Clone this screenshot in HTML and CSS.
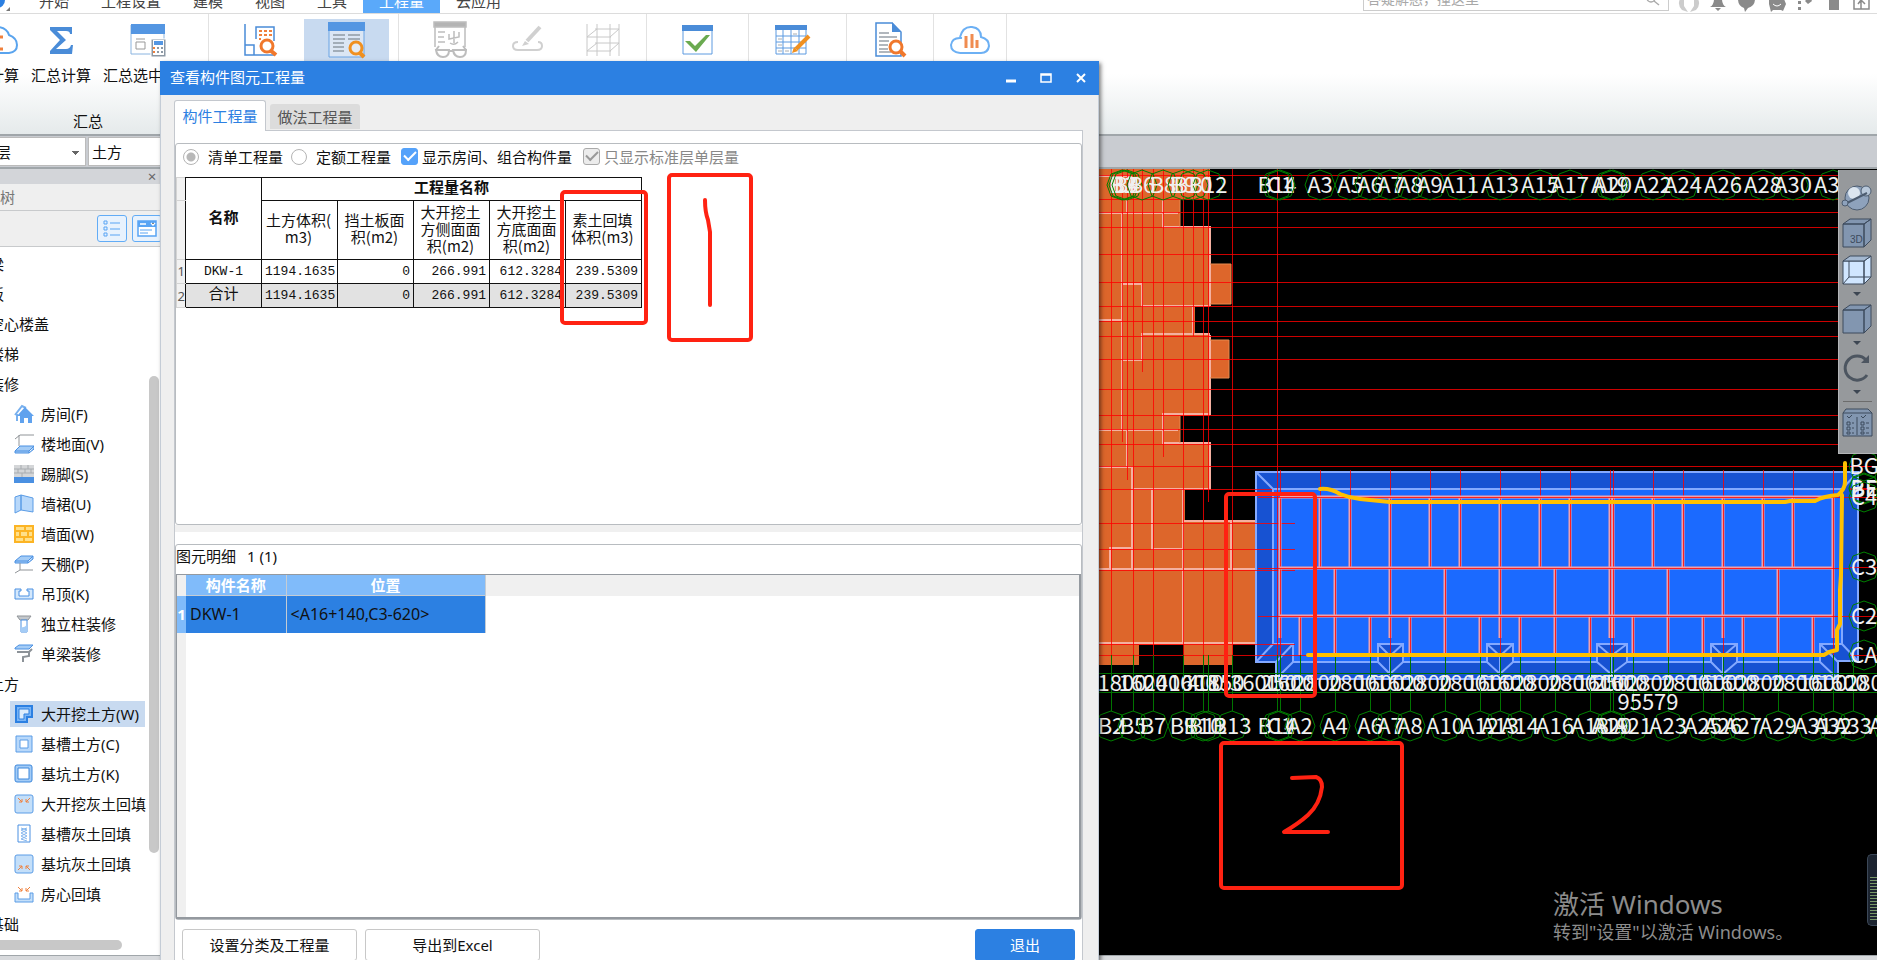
FILE: index.html
```html
<!DOCTYPE html>
<html lang="zh-CN">
<head>
<meta charset="UTF-8">
<meta name="viewport" content="width=device-width, initial-scale=1.0">
<title>查看构件图元工程量</title>
<link rel="stylesheet" href="styles.css">
</head>
<body>
<header class="menubar">
    <svg class="app-logo" width="16" height="13" viewBox="0 0 16 13"><circle cx="-3" cy="0" r="8" fill="#2c80e2"/><path d="M10 7v4H6z" fill="#777"/></svg>
    <nav class="menu">
        <a href="#">开始</a>
        <a href="#">工程设置</a>
        <a href="#">建模</a>
        <a href="#">视图</a>
        <a href="#">工具</a>
        <a href="#" class="current">工程量</a>
        <a href="#">云应用</a>
    </nav>
    <div class="search">
        <input type="text" placeholder="答疑解惑，撞这里" aria-label="搜索">
        <svg width="14" height="14" viewBox="0 0 14 14" fill="none" stroke="#aaa" stroke-width="1.5"><circle cx="5" cy="6" r="4"/><path d="M8 9l5 4"/></svg>
    </div>
    <svg class="status-icons" width="204" height="14" viewBox="1674 -4 204 14" fill="#8a8a8a">
        <path d="M1681-4q-3 6 2 11l6 2-4-6v-7zM1699-4q3 6-2 11l-6 2 4-6v-7z" fill="#ccc"/>
        <path d="M1711 4q4-2 4-8h8q0 6 4 8zM1716 5h6l-3 3z"/>
        <path d="M1739-4h17q0 7-7 9l-3 4-1-4q-6-2-6-9z"/>
        <path d="M1770-4h15l2 5-3 7-2-1h-8l-2 2-2-8z"/>
        <path d="M1774 1q4 4 8 0" fill="none" stroke="#fff"/>
        <path d="M1799-2h3v3h-3zM1799 4h3v3h-3zM1806-2l3 3 4-3-1-2h-4z"/>
        <path d="M1830-4h10V7h-10z"/>
        <path d="M1855-4V6h15V-4M1862 6v-9M1859 1l3-4 4 4" fill="none" stroke="#8a8a8a" stroke-width="1.5"/>
    </svg>
</header>

<div class="ribbon">
    <div class="group group-sum">
        <div class="tools">
            <button class="tool"><svg width="44" height="36" viewBox="0 0 44 36"><path d="M11 31Q3 30 3 23t8-8q2-10 12-10 9 1 11 8 8 3 8 10t-8 8z" fill="#fff" stroke="#5aa4ee" stroke-width="2"/><path d="M28 15H17l6 6-6 6h11" fill="none" stroke="#f0803c" stroke-width="3"/></svg><span>云计算</span></button>
            <button class="tool"><svg width="36" height="36" viewBox="0 0 36 36"><path d="M7 5h22v7h-2q0-3-4-3H14l9 9-10 9h10q4 0 5-4h2l-1 9H7v-3l10-11L7 8z" fill="#4a8cd8"/></svg><span>汇总计算</span></button>
            <button class="tool"><svg width="36" height="36" viewBox="0 0 36 36"><path d="M1 3h33v29H1z" fill="#fff" stroke="#8ab4e0"/><path d="M1 2h34v10H1z" fill="#5496e2"/><path d="M6 20h9v7H6zM6 17h9" fill="none" stroke="#999"/><path d="M21 17h15v18H21z" fill="#8c98a4" stroke="#fff"/><path d="M23 18h11v15H23z" fill="#fff"/><path d="M24 19h9v4h-9z" fill="#5496e2"/><path d="M23 25h2v2h-2zM23 29h2v2h-2z" fill="#f0803c"/><path d="M27 25h2v2h-2zM31 25h2v2h-2zM27 29h2v2h-2zM31 29h2v2h-2z" fill="#8c98a4"/></svg><span>汇总选中图元</span></button>
        </div>
        <div class="caption">汇总</div>
    </div>
    <div class="group group-view">
        <button class="tool" aria-label="查看计算式"><svg width="38" height="36" viewBox="0 0 38 36"><path d="M4 2v31h29M4 23h9v10M15 17V5h18v14" fill="none" stroke="#4a8cd8" stroke-width="1.5"/><path d="M18 8h3v2h-3zM23 8h3v2h-3zM28 8h3v2h-3zM18 12h3v2h-3zM23 12h3v2h-3zM28 12h3v2h-3zM18 16h2v2h-2z" fill="#f0803c"/><circle cx="26" cy="24" r="6" fill="#fff" stroke="#f0782c" stroke-width="3"/><path d="M29 28l6 5" stroke="#f0782c" stroke-width="4"/></svg></button>
        <button class="tool active" aria-label="查看工程量"><svg width="38" height="38" viewBox="0 0 38 38"><path d="M1 2h35v34H1z" fill="#dbe6f4" stroke="#6aa4e4"/><path d="M0 1h37v9H0z" fill="#5496e2"/><path d="M5 14h12M20 14h12M5 18h12M20 18h12M5 22h11M5 26h11M5 30h11" stroke="#909aa4" stroke-width="1.5"/><circle cx="28" cy="27" r="6" fill="#e4ecf6" stroke="#f09020" stroke-width="3"/><path d="M31 31l5 5" stroke="#f09020" stroke-width="4"/></svg></button>
    </div>
    <div class="group group-check">
        <button class="tool" aria-label="查看报表" disabled><svg width="38" height="38" viewBox="0 0 38 38" fill="none" stroke="#bdbdbd" stroke-width="1.5"><path d="M2 26V2h30v24"/><path d="M1 1h32v5H1z" fill="#b4b4b4"/><path d="M5 11h7M5 16h6M5 21h7M21 10v12M16 13v5l10-2v-5M17 22q4 3 8-1"/><path d="M3 29h13q0 7-6 7t-7-7zM20 29h13q0 7-6 7t-7-7z" fill="#fff" stroke-width="2"/><path d="M16 30h5M3 29l3-4M33 29l-3-4" stroke-width="2"/></svg></button>
        <button class="tool" aria-label="标记" disabled><svg width="36" height="36" viewBox="0 0 36 36" fill="none" stroke="#d0d0d0" stroke-width="2"><path d="M8 20q-5 0-5 4t5 4h19q5 0 5-4t-4-4"/><path d="M17 19L30 5" stroke-width="4"/><path d="M12 24l3-5 4 3z" fill="#d0d0d0" stroke="none"/></svg></button>
        <button class="tool" aria-label="钢筋三维" disabled><svg width="36" height="36" viewBox="0 0 36 36" fill="none" stroke="#c8c8c8"><path d="M2 2v32M12 2v32M25 2v32M34 2v32M2 15h24M10 7h24M2 29h24M10 21h24M2 15l10-8M25 15l9-8M2 29l10-8M25 29l9-8"/></svg></button>
    </div>
    <div class="group group-single">
        <button class="tool" aria-label="合法性检查"><svg width="34" height="34" viewBox="0 0 34 34"><path d="M2 3h29v28H2z" fill="#fff" stroke="#5c9ae0"/><path d="M1 2h31v6H1z" fill="#4a8cd8"/><path d="M4 18h5l5 5L25 12h4L15 29z" fill="#6aaa50"/></svg></button>
    </div>
    <div class="group group-edit">
        <button class="tool" aria-label="编辑报表"><svg width="36" height="34" viewBox="0 0 36 34"><path d="M1 3h30v28H1z" fill="#fff" stroke="#5c9ae0"/><path d="M0 2h32v5H0z" fill="#4a8cd8"/><path d="M1 13h30M1 19h30M1 25h30M8 7v24M16 7v24M24 7v24" stroke="#5c9ae0"/><path d="M3 22h4M3 28h4M10 28h4M3 16h4M18 11h4" stroke="#a8acb0"/><path d="M34 13L21 26" stroke="#f09020" stroke-width="4"/><path d="M17 30l2-6 4 4z" fill="#f09020"/></svg></button>
    </div>
    <div class="group group-report">
        <button class="tool" aria-label="查看报表"><svg width="34" height="38" viewBox="0 0 34 38"><path d="M3 2h16l9 9v24H3z" fill="#fff" stroke="#4a8cd8" stroke-width="1.5"/><path d="M19 1v10h9z" fill="#4a8cd8"/><path d="M6 12h10M6 16h18M6 20h10M6 24h9M6 28h9M6 31h12" stroke="#98a0a8" stroke-width="1.5"/><circle cx="23" cy="26" r="6" fill="#fff" stroke="#f0782c" stroke-width="3"/><path d="M27 30l5 5" stroke="#f0782c" stroke-width="4"/></svg></button>
    </div>
    <div class="group group-cloud">
        <button class="tool" aria-label="云指标"><svg width="44" height="34" viewBox="0 0 44 34"><path d="M12 30Q3 29 3 22q1-8 11-7M12 14Q15 3 24 4q9 1 9 10 8 2 8 9-1 7-8 7H12" fill="none" stroke="#6cb0f4" stroke-width="2"/><path d="M18 13v12M24 11v14M29 17v8" stroke="#f08c50" stroke-width="3"/></svg></button>
    </div>
</div>

<div class="contextbar">
    <select class="floor" aria-label="楼层"><option>基础层</option></select>
    <select class="category" aria-label="构件类别"><option>土方</option></select>
</div>

<main class="workspace">
    <aside class="sidebar">
        <div class="side-title"><button aria-label="关闭">×</button></div>
        <div class="side-name">导航树</div>
        <div class="side-tools">
            <button aria-label="列表"><svg width="18" height="18" viewBox="0 0 18 18" fill="none" stroke="#58a4f4"><path d="M1 1h3v3H1zM1 7h3v3H1zM1 13h3v3H1zM7 3h10M7 9h10M7 15h10"/></svg></button>
            <button aria-label="面板"><svg width="20" height="18" viewBox="0 0 20 18"><path d="M1 1h18v15H1z" fill="#fff" stroke="#58a4f4" stroke-width="1.5"/><path d="M1 1h18v6H1z" fill="#58a4f4"/><path d="M3 4h6M14 3l2 2 2-2" stroke="#fff" stroke-width="1.5"/><path d="M3 10h12M3 13h8" stroke="#58a4f4"/></svg></button>
        </div>
        <div class="tree">
            <ul>
                <li><a href="#">梁</a></li>
                <li><a href="#">板</a></li>
                <li><a href="#">空心楼盖</a></li>
                <li><a href="#">楼梯</a></li>
                <li><a href="#">装修</a>
                    <ul>
                        <li><a href="#"><svg class="ico" viewBox="0 0 20 20"><path d="M1 11L8 2l4 2M3 10v7" fill="none" stroke="#78b0ee" stroke-width="2"/><path d="M3 12l8-9 9 9h-2v7h-4v-5h-4v5H6v-7z" fill="#60a2ee"/></svg>房间(F)</a></li>
                        <li><a href="#"><svg class="ico" viewBox="0 0 20 20"><path d="M20 1H6L1 5M5 1v11" fill="none" stroke="#909498"/><path d="M1 17l5-5h14l-5 5zM1 17v2h14v-2M15 19l5-4v-3" fill="#a4ccf6" stroke="#4a90e2"/></svg>楼地面(V)</a></li>
                        <li><a href="#"><svg class="ico" viewBox="0 0 20 20"><path d="M0 1h20v12H0z" fill="#d4d6d8"/><path d="M0 5h20M0 9h20M7 1v4M14 1v4M4 5v4M11 5v4M17 5v4M8 9v4" stroke="#a8acb0"/><path d="M0 13h20v6H0z" fill="#4a90e2"/></svg>踢脚(S)</a></li>
                        <li><a href="#"><svg class="ico" viewBox="0 0 20 20"><path d="M1 3l6-2v15l-6 3zM7 1l12 3v14L7 16z" fill="#b8d8fa" stroke="#5a9ce6"/></svg>墙裙(U)</a></li>
                        <li><a href="#"><svg class="ico" viewBox="0 0 20 20"><path d="M1 2h18v16H1z" fill="#ffe08a" stroke="#fcb424" stroke-width="2"/><path d="M1 7h18M1 13h18M11 2v5M6 7v6M14 7v6M10 13v5" stroke="#fcb424" stroke-width="2"/></svg>墙面(W)</a></li>
                        <li><a href="#"><svg class="ico" viewBox="0 0 20 20"><path d="M1 7l6-5h12l-5 5zM1 7v2h13V7M14 9l5-4V2" fill="#a4ccf6" stroke="#4a90e2"/><path d="M6 9v7h13M6 16l-5 3" fill="none" stroke="#909498"/></svg>天棚(P)</a></li>
                        <li><a href="#"><svg class="ico" viewBox="0 0 20 20"><path d="M1 5h6v2H5v5h10V7h-2V5h6v10H1z" fill="#d4e8fc" stroke="#4a90e2"/></svg>吊顶(K)</a></li>
                        <li><a href="#"><svg class="ico" viewBox="0 0 20 20"><path d="M3 2h14l-3 4H6z" fill="#c4c8cc" stroke="#909498"/><path d="M7 6h6v12H7z" fill="#fff" stroke="#4a90e2"/><path d="M7 13q4 1 6-3v8H7z" fill="#a4ccf6"/></svg>独立柱装修</a></li>
                        <li><a href="#"><svg class="ico" viewBox="0 0 20 20"><path d="M1 4l4-3h14l-4 4H1z" fill="#a4ccf6" stroke="#4a90e2"/><path d="M3 8h12l3-3M15 8v4l-6 1v5" fill="none" stroke="#8c9298" stroke-width="2"/></svg>单梁装修</a></li>
                    </ul>
                </li>
                <li><a href="#">土方</a>
                    <ul>
                        <li><a href="#" class="selected"><svg class="ico" viewBox="0 0 20 20"><path d="M2 2h16v11h-5v5H2z" fill="#78b4f6" stroke="#2c80e2" stroke-width="2"/><path d="M5 5h10v5h-5v5H5z" fill="#dcecfc" stroke="#2c80e2"/></svg>大开挖土方(W)</a></li>
                        <li><a href="#"><svg class="ico" viewBox="0 0 20 20"><path d="M2 2h16v16H2z" fill="#b8d8fa" stroke="#5a9ce6"/><path d="M6 6h8v8H6z" fill="#fff" stroke="#5a9ce6"/></svg>基槽土方(C)</a></li>
                        <li><a href="#"><svg class="ico" viewBox="0 0 20 20"><rect x="1" y="1" width="17" height="17" rx="2" fill="#a4ccf6" stroke="#3c88dc"/><path d="M4 4h11v11H4z" fill="#fff" stroke="#3c88dc"/></svg>基坑土方(K)</a></li>
                        <li><a href="#"><svg class="ico" viewBox="0 0 20 20"><rect x="1" y="1" width="18" height="18" rx="2" fill="#c4dff9" stroke="#5a9ce6"/><path d="M4 4l4 4M8 5v3H5M16 4l-4 4M12 5v3h3" fill="none" stroke="#f0803c"/></svg>大开挖灰土回填</a></li>
                        <li><a href="#"><svg class="ico" viewBox="0 0 20 20"><path d="M4 1h12v17H4z" fill="#fff" stroke="#4a90e2"/><path d="M7 4l6 2-6 3 6 3-6 3 6 2M13 4L7 6l6 3-6 3 6 3" fill="none" stroke="#84b6ee"/></svg>基槽灰土回填</a></li>
                        <li><a href="#"><svg class="ico" viewBox="0 0 20 20"><rect x="1" y="1" width="18" height="18" rx="2" fill="#c4dff9" stroke="#5a9ce6"/><path d="M4 16l4-4M5 12h3v3M16 16l-4-4M15 12h-3v3" fill="none" stroke="#f0803c"/></svg>基坑灰土回填</a></li>
                        <li><a href="#"><svg class="ico" viewBox="0 0 20 20"><path d="M1 9h3v6h12V9h3v9H1z" fill="#c4dff9" stroke="#5a9ce6"/><path d="M4 3l4 4M8 4v3H5M16 3l-4 4M12 4v3h3" fill="none" stroke="#f0803c"/></svg>房心回填</a></li>
                    </ul>
                </li>
                <li><a href="#">基础</a></li>
            </ul>
            <div class="thumb-v"></div>
            <div class="thumb-h"></div>
        </div>
    </aside>

    <section class="viewport">
        <svg class="plan" viewBox="160 169 1717 786" preserveAspectRatio="xMaxYMin slice" role="img" aria-label="平面图">
            <!-- earlier pits -->
            <path fill="#dd662b" d="M160 169H1210V200H1180V227H1210V264H1231V304H1210V307H1195V335H1210V340H1229V378H1210V416H1180V443H1210V490H1185V522H1277V643H1233V665H1184V645H1139V665H160z"/>
            <path class="pit-edge" d="M1099 176H1132M1127 200V213M1099 213H1178M1122 213V430M1122 284H1142V306H1210M1099 320H1122M1210 334H1142V360H1122M1099 430H1178M1127 430V467M1099 467H1132V569M1163 200V227H1210V306M1193 307V335M1210 335V414H1163V443H1210V489H1133M1152 489V549H1183M1183 489V643M1184 521H1276V643M1231 521V569M1110 569V548H1132M1099 569H1275M1099 643H1276"/>
            <path fill="none" stroke="#e8894f" d="M1210 264H1231V304H1210M1210 340H1229V378H1210M1180 200V227M1180 416V443"/>
            <!-- selected excavation: slope, then floor -->
            <path fill="#1752d2" stroke="#84a9ff" stroke-width="2" d="M1256 472H1858V661H1838V679H1276V662H1256z"/>
            <path fill="#1b6aff" stroke="#84a9ff" stroke-width="2" d="M1273 489H1842V644H1820V662H1737V644H1711V662H1627V644H1597V662H1513V644H1487V662H1403V644H1378V662H1293V644H1273z"/>
            <path fill="none" stroke="#84a9ff" stroke-width="2" d="M1256 472L1273 489M1858 472L1842 489M1273 644L1256 662M1293 644L1276 662V679L1293 662M1378 644L1390 656V674L1378 662M1403 644L1390 656M1390 674L1403 662M1378 644H1403M1487 644L1500 656V674L1487 662M1513 644L1500 656M1500 674L1513 662M1487 644H1513M1597 644L1611 656V674L1597 662M1627 644L1611 656M1611 674L1627 662M1597 644H1627M1711 644L1723 656V674L1711 662M1737 644L1723 656M1723 674L1737 662M1711 644H1737M1820 644L1838 662M1820 662L1838 679M1842 644L1858 661"/>
            <g id="axes"></g>
            <path class="highlighter" d="M1320 489Q1330 488 1340 494Q1350 498 1360 499L1390 502H1785L1790 501H1815Q1824 496 1838 495Q1845 489 1845 482V463M1842 495L1841 575L1840 590V624L1837 630V650L1829 652L1824 655H1308"/>
            <g class="mark">
                <rect x="1226" y="494" width="89" height="202" rx="3"/>
                <rect x="1221" y="743" width="181" height="145" rx="3"/>
                <path d="M1292 778L1316 777Q1322 779 1322 787Q1320 804 1308 815Q1298 824 1284 832L1328 832"/>
            </g>
        </svg>
        <div class="viewtools">
            <button aria-label="动态观察"><svg width="32" height="30" viewBox="0 0 32 30"><circle cx="16" cy="16" r="12" fill="#8ea2bc" stroke="#4c5c70"/><circle cx="13" cy="11" r="6" fill="#dce6f0"/><circle cx="25" cy="9" r="5" fill="#b8c8da" stroke="#4c5c70"/><path d="M4 22l22-11" stroke="#4c5c70" stroke-width="2"/><circle cx="4" cy="21" r="3" fill="#8ea2bc" stroke="#4c5c70"/></svg></button>
            <button aria-label="三维"><svg class="cube" width="32" height="32" viewBox="0 0 32 32"><path d="M2 7L9 2h21l-7 5zM23 7l7-5v21l-7 7zM2 7h21v23H2z"/><text x="9" y="26">3D</text></svg></button>
            <button aria-label="线框" class="drop"><svg class="cube wire" width="32" height="32" viewBox="0 0 32 32"><path d="M2 7h21v23H2zM23 7l7-5v21l-7 7z"/><path d="M2 7L9 2h21l-7 5z" class="lid"/><path d="M8 7v16h22M8 23l-6 7" class="hidden-edge"/></svg></button>
            <button aria-label="实体" class="drop"><svg class="cube" width="32" height="32" viewBox="0 0 32 32"><path d="M2 7L9 2h21l-7 5zM23 7l7-5v21l-7 7zM2 7h21v23H2z"/></svg></button>
            <button aria-label="旋转" class="drop"><svg width="32" height="32" viewBox="0 0 32 32" fill="none" stroke="#4c5560" stroke-width="3"><path d="M26 23A12 12 0 1 1 25 8"/><path d="M28 3v8h-8z" fill="#4c5560" stroke="none"/></svg></button>
            <hr>
            <button aria-label="显示设置"><svg class="cube" width="32" height="32" viewBox="0 0 32 32"><path d="M2 6l3-4h22l4 4v23H2zM2 6h29"/><path d="M6 9l2 2 3-3M20 9l2 2 3-3M6 15h3v3H6zM6 20h3v3H6zM6 25h3v2H6zM11 16h2M11 21h2M11 26h2M16 10v18M20 15h3v3h-3zM20 20h3v3h-3zM20 25h3v2h-3zM25 16h3M25 21h3M25 26h3"/></svg></button>
        </div>
        <div class="meter"></div>
        <div class="activate">
            <div class="activate-title">激活 Windows</div>
            <div>转到"设置"以激活 Windows。</div>
        </div>
    </section>
</main>
<footer class="bottombar"></footer>

<div class="dialog" role="dialog" aria-labelledby="dialog-title">
    <div class="titlebar">
        <span id="dialog-title">查看构件图元工程量</span>
        <div class="window-buttons">
            <button aria-label="最小化"><svg width="12" height="12" viewBox="0 0 12 12"><path d="M1 9h10" stroke="#fff" stroke-width="3"/></svg></button>
            <button aria-label="最大化"><svg width="12" height="12" viewBox="0 0 12 12"><path d="M1 2h10v8H1zM1 3h10" fill="none" stroke="#fff" stroke-width="1.5"/></svg></button>
            <button aria-label="关闭"><svg width="12" height="12" viewBox="0 0 12 12"><path d="M2 2l8 8M10 2l-8 8" stroke="#fff" stroke-width="2"/></svg></button>
        </div>
    </div>
    <div class="tabs">
        <button class="tab on">构件工程量</button>
        <button class="tab">做法工程量</button>
    </div>
    <div class="sheet">
        <div class="pane quantities">
            <div class="options">
                <label><input type="radio" name="kind" checked disabled>清单工程量</label>
                <label><input type="radio" name="kind">定额工程量</label>
                <label class="check"><input type="checkbox" checked>显示房间、组合构件量</label>
                <label class="check off"><input type="checkbox" checked disabled>只显示标准层单层量</label>
            </div>
            <table class="grid">
                <colgroup><col class="num"><col><col><col><col><col><col></colgroup>
                <thead>
                    <tr class="top"><td class="num"></td><th rowspan="2">名称</th><th colspan="5">工程量名称</th></tr>
                    <tr class="names"><td class="num"></td><td>土方体积(<br>m3)</td><td>挡土板面<br>积(m2)</td><td>大开挖土<br>方侧面面<br>积(m2)</td><td>大开挖土<br>方底面面<br>积(m2)</td><td>素土回填<br>体积(m3)</td></tr>
                </thead>
                <tbody>
                    <tr><td class="num">1</td><td class="name">DKW-1</td><td>1194.1635</td><td>0</td><td>266.991</td><td>612.3284</td><td>239.5309</td></tr>
                    <tr class="total"><td class="num">2</td><td class="name">合计</td><td>1194.1635</td><td>0</td><td>266.991</td><td>612.3284</td><td>239.5309</td></tr>
                </tbody>
            </table>
        </div>
        <div class="splitter"></div>
        <div class="pane details">
            <div class="details-title"><span>图元明细</span><span>1 (1)</span></div>
            <div class="list">
                <table>
                    <thead><tr><td class="num"></td><th class="part">构件名称</th><th class="place">位置</th><td class="rest"></td></tr></thead>
                    <tbody>
                        <tr><th class="num">1</th><td>DKW-1</td><td>&lt;A16+140,C3-620&gt;</td></tr>
                    </tbody>
                </table>
                <div class="gutter"></div>
            </div>
        </div>
        <div class="actions">
            <button>设置分类及工程量</button>
            <button>导出到Excel</button>
            <button class="exit">退出</button>
        </div>
    </div>
    <svg class="mark dialog-marks" width="200" height="180" viewBox="558 170 200 180">
        <rect x="562" y="192" width="84" height="131" rx="3"/>
        <rect x="669" y="175" width="82" height="165" rx="3"/>
        <path d="M705 200Q705 212 708 220L710 232V305"/>
    </svg>
</div>

<script>
    const axes = document.getElementById('axes');
    let out = '';

    function line(x1, y1, x2, y2, cls) {
        out += `<line class="${cls}" x1="${x1}" y1="${y1}" x2="${x2}" y2="${y2}"/>`;
    }

    function bubble(x, y, label) {
        const r = 15, k = 11;
        out += `<polygon class="bubble" points="${x},${y - r} ${x + k},${y - k} ${x + r},${y} ${x + k},${y + k} ${x},${y + r} ${x - k},${y + k} ${x - r},${y} ${x - k},${y - k}"/>`;
        out += `<text x="${x}" y="${y + 8}">${label}</text>`;
    }

    // long horizontal axes
    [175, 199, 212, 227, 254, 282, 306, 321, 336, 359, 389, 415, 429, 444, 466].forEach(y => line(1099, y, 1877, y, 'axis'));
    [[489, 1272], [523, 1295], [549, 1295], [570, 1295], [644, 1295], [655, 1310]].forEach(([y, x]) => line(1099, y, x, y, 'axis'));
    // vertical axes with the y they stop at
    [[1111, 655], [1122, 442], [1127, 480], [1133, 655], [1142, 372], [1153, 655], [1163, 457], [1183, 655], [1193, 336],
     [1203, 655], [1208, 502], [1232, 655], [1277, 655]].forEach(([x, y]) => line(x, 169, x, y, 'axis'));

    // grid inside the excavation
    const full = [1280, 1390, 1500, 1610, 1613, 1723, 1833];
    const upper = [1320, 1350, 1430, 1460, 1540, 1570, 1653, 1683, 1763, 1793];
    const middle = [1335, 1445, 1555, 1668, 1778];
    const lower = [1300, 1370, 1410, 1480, 1520, 1590, 1633, 1703, 1743, 1813];
    full.forEach(x => { line(x, 497, x, 638, 'wall'); line(x, 470, x, 655, 'axis'); });
    upper.forEach(x => { line(x, 497, x, 568, 'wall'); line(x, 470, x, 568, 'axis'); });
    middle.forEach(x => { line(x, 568, x, 655, 'wall'); line(x, 568, x, 655, 'axis'); });
    lower.forEach(x => { line(x, 616, x, 655, 'wall'); line(x, 616, x, 655, 'axis'); });
    [497, 568, 616].forEach(y => { line(1280, y, 1833, y, 'wall'); line(1258, y, 1850, y, 'axis'); });

    // dimension chain
    const bottom = [[1111, 'B2'], [1133, 'B5'], [1153, 'B7'], [1183, 'B9'], [1203, 'B10'], [1208, 'B12'], [1232, 'B13'], [1277, 'B14'],
        [1280, 'C1'], [1300, 'A2'], [1335, 'A4'], [1370, 'A6'], [1390, 'A7'], [1410, 'A8'], [1445, 'A10'], [1480, 'A12'], [1500, 'A13'],
        [1520, 'A14'], [1555, 'A16'], [1590, 'A18'], [1610, 'A19'], [1613, 'A20'], [1633, 'A21'], [1668, 'A23'], [1703, 'A25'],
        [1723, 'A26'], [1743, 'A27'], [1778, 'A29'], [1813, 'A31'], [1833, 'A32'], [1853, 'A33'], [1888, 'A35']];
    const sizes = [1800, 1600, 2400, 1600, 400, 1850, 3600, 250, 1600, 2800, 2800, 1600, 1600, 2800, 2800, 1600, 1600, 2800, 2800,
        1600, 250, 1600, 2800, 2800, 1600, 1600, 2800, 2800, 1600, 1600, 2800];
    line(1099, 673, 1877, 673, 'dim');
    line(1099, 692, 1877, 692, 'dim');
    bottom.forEach(([x, label], i) => {
        line(x, 655, x, 711, 'dim');
        bubble(x, 726, label);
        if (i < sizes.length) {
            out += `<text x="${(x + bottom[i + 1][0]) / 2}" y="691">${sizes[i]}</text>`;
        }
    });
    out += '<text x="1648" y="710">95579</text>';

    [[1122, 'B1'], [1124, 'B3'], [1127, 'B4'], [1142, 'B6'], [1163, 'B8'], [1183, 'B9'], [1193, 'B10'], [1208, 'B12'], [1277, 'B14'],
     [1280, 'C1'], [1320, 'A3'], [1350, 'A5'], [1370, 'A6'], [1390, 'A7'], [1410, 'A8'], [1430, 'A9'], [1460, 'A11'], [1500, 'A13'],
     [1540, 'A15'], [1570, 'A17'], [1610, 'A19'], [1613, 'A20'], [1653, 'A22'], [1683, 'A24'], [1723, 'A26'], [1763, 'A28'],
     [1793, 'A30'], [1833, 'A32']].forEach(([x, label]) => bubble(x, 185, label));

    [[466, 'BG'], [488, 'BE'], [489, 'BF'], [497, 'C4'], [567, 'C3'], [616, 'C2'], [655, 'CA']].forEach(([y, label]) => {
        line(1850, y, 1877, y, 'axis');
        bubble(1864, y, label);
    });

    axes.innerHTML = out;
</script>
</body>
</html>
```
FILE: styles.css
```css
* {
    box-sizing: border-box;
}
body {
    margin: 0;
    height: 100vh;
    overflow: hidden;
    display: flex;
    flex-direction: column;
    position: relative;
    font-family: "Noto Sans", "Noto Sans CJK SC", sans-serif;
    font-size: 15px;
    line-height: 20px;
    color: #111;
    background: #fff;
}
a {
    color: inherit;
    text-decoration: none;
}
button, input, select {
    font: inherit;
    color: inherit;
}
button {
    padding: 0;
    border: none;
    background: none;
    cursor: pointer;
}
svg {
    display: block;
    flex-shrink: 0;
}

/* menu bar */
.menubar {
    height: 14px;
    flex-shrink: 0;
    display: flex;
    align-items: flex-end;
    border-bottom: 1px solid #dcdcdc;
    overflow: hidden;
    color: #444;
}
.menu {
    display: flex;
    margin-left: 7px;
}
.menu a {
    padding: 0 16px 2px;
}
.menu .current {
    background: #5aa9fa;
    color: #fff;
}
.search {
    margin-left: auto;
    margin-bottom: 2px;
    width: 306px;
    height: 24px;
    flex-shrink: 0;
    display: flex;
    align-items: center;
    padding-right: 8px;
    border: 1px solid #ccc;
}
.search input {
    flex: 1;
    min-width: 0;
    border: none;
    outline: none;
    padding: 0 3px;
    font-size: 14px;
}
.search input::placeholder {
    color: #a8a8a8;
}
.status-icons {
    margin-left: 4px;
}

/* ribbon */
.ribbon {
    height: 122px;
    flex-shrink: 0;
    display: flex;
    background: linear-gradient(#fff 50%, #e5eaeb);
    border-bottom: 2px solid #a0a6aa;
}
.group {
    display: flex;
    position: relative;
    align-items: flex-start;
    justify-content: space-around;
    padding-top: 5px;
    border-right: 1px solid #e2e2e2;
}
.group-sum {
    width: 241px;
    margin-left: -32px;
    flex-direction: column;
    justify-content: space-between;
    padding-bottom: 3px;
}
.tools {
    display: flex;
}
.caption {
    align-self: center;
}
.tool {
    display: flex;
    flex-direction: column;
    align-items: center;
    padding: 0 6px;
}
.tool svg {
    height: 42px;
}
.tool span {
    margin-top: 2px;
    line-height: 24px;
    white-space: nowrap;
}
.group-view {
    width: 190px;
    padding-left: 8px;
    padding-right: 8px;
}
.group-view .tool {
    width: 85px;
    height: 90px;
}
.tool.active {
    background: #c8daf0;
}
.group-check {
    width: 248px;
    padding-left: 14px;
    padding-right: 6px;
}
.group-single {
    width: 102px;
}
.group-edit {
    width: 98px;
    padding-right: 10px;
}
.group-report {
    width: 87px;
}
.group-cloud {
    width: 73px;
}

.contextbar {
    height: 33px;
    flex-shrink: 0;
    display: flex;
    gap: 2px;
    padding: 1px 0;
    background: #c9ccd1;
    border-bottom: 2px solid #a0a6aa;
}
.contextbar select {
    appearance: none;
    border: 1px solid #bbb;
    border-radius: 0;
    background: #fff;
    padding: 0 3px;
}
.floor {
    width: 124px;
    margin-left: -38px;
}
.contextbar .floor {
    background: linear-gradient(45deg, transparent 50%, #666 50%) 108px 13px / 4px 4px no-repeat, linear-gradient(-45deg, transparent 50%, #666 50%) 112px 13px / 4px 4px no-repeat, #fff;
}
.category {
    width: 90px;
}

.workspace {
    flex: 1;
    min-height: 0;
    display: flex;
}

/* navigation tree */
.sidebar {
    width: 160px;
    flex-shrink: 0;
    display: flex;
    flex-direction: column;
    overflow: hidden;
    background: #efefef;
}
.side-title {
    height: 15px;
    display: flex;
    justify-content: flex-end;
    background: #d3d5d9;
}
.side-title button {
    width: 16px;
    line-height: 15px;
    color: #666;
}
.side-name {
    height: 27px;
    margin-left: -30px;
    line-height: 26px;
    color: #777;
    border-bottom: 1px solid #c8cacc;
}
.side-tools {
    height: 36px;
    display: flex;
    gap: 5px;
    padding: 4px 0 4px 97px;
    border-bottom: 1px solid #c8cacc;
}
.side-tools button {
    width: 30px;
    flex-shrink: 0;
    display: flex;
    align-items: center;
    justify-content: center;
    border: 1px solid #62acf6;
    border-radius: 3px;
    background: #e8f2fd;
}
.tree {
    flex: 1;
    position: relative;
    padding-top: 2px;
    background: #fff;
    overflow: hidden;
}
.tree ul {
    margin: 0;
    padding: 0;
    list-style: none;
}
.tree > ul {
    margin-left: -11px;
}
.tree a {
    height: 26px;
    margin: 2px 0;
    display: flex;
    align-items: center;
    white-space: nowrap;
}
.tree li {
    display: flow-root;
}
.tree li li a {
    width: 135px;
    margin-left: 21px;
    padding-left: 4px;
    gap: 7px;
}
.ico {
    width: 20px;
    height: 20px;
}
.tree a.selected {
    background: #c8daf0;
}
.thumb-v, .thumb-h {
    position: absolute;
    background: #c8c8c8;
    border-radius: 5px;
}
.thumb-v {
    right: 1px;
    top: 129px;
    width: 10px;
    height: 477px;
}
.thumb-h {
    left: -10px;
    bottom: 5px;
    width: 132px;
    height: 10px;
}

/* drawing area */
.viewport {
    flex: 1;
    min-width: 0;
    position: relative;
    background: #000;
}
.plan {
    width: 100%;
    height: 100%;
}
.plan text {
    font-family: "Noto Sans CJK SC", sans-serif;
    font-size: 22px;
    text-anchor: middle;
    fill: #f0f0f0;
}
.pit-edge {
    fill: none;
    stroke: #f4b0a0;
    stroke-width: 2;
}
.wall {
    stroke: #f0a0ac;
    stroke-width: 3;
}
.axis {
    stroke: #ff0000;
    stroke-opacity: 0.8;
    stroke-width: 1;
    shape-rendering: crispEdges;
}
.dim {
    stroke: #007400;
    shape-rendering: crispEdges;
}
.bubble {
    fill: none;
    stroke: #008000;
}
.highlighter {
    fill: none;
    stroke: #ffc000;
    stroke-width: 4;
    stroke-linecap: round;
    stroke-linejoin: round;
}
.mark {
    fill: none;
    stroke: #ff2212;
    stroke-width: 4;
    stroke-linecap: round;
    stroke-linejoin: round;
}
.viewtools {
    position: absolute;
    top: 1px;
    right: 0;
    width: 39px;
    height: 284px;
    padding: 12px 4px 0 2px;
    display: flex;
    flex-direction: column;
    gap: 5px;
    align-items: center;
    background: #96999c;
    border-left: 1px solid #b4b6b8;
    border-bottom: 1px solid #b4b6b8;
}
.viewtools .drop::after {
    content: "";
    display: block;
    width: 0;
    margin: 6px auto 2px;
    border: 4px solid transparent;
    border-top-color: #3c4652;
    border-bottom: none;
}
.viewtools hr {
    width: 29px;
    margin: 0;
    border: none;
    border-top: 1px solid #6c6c6c;
}
.cube {
    fill: #8296b0;
    stroke: #3c4a5c;
    stroke-width: 1;
}
.cube text {
    font-family: "Liberation Sans", sans-serif;
    font-size: 10px;
    fill: #3c4a5c;
    stroke: none;
}
.wire {
    fill: #d0e6ff;
}
.wire .lid {
    fill: #a4b8d0;
}
.wire .hidden-edge {
    fill: none;
}
.meter {
    position: absolute;
    right: 0;
    bottom: 29px;
    width: 10px;
    height: 72px;
    padding: 20px 0 3px 2px;
    border: 1px solid #3c4858;
    border-right: none;
    border-radius: 5px 0 0 5px;
    background: repeating-linear-gradient(#1c2430 0 2px, #789868 2px 3px) content-box, #1c2430;
}
.activate {
    position: absolute;
    left: 1393px;
    bottom: 10px;
    font-size: 18px;
    line-height: 26px;
    color: #8c8c8c;
    white-space: nowrap;
}
.activate-title {
    font-size: 26px;
    line-height: 30px;
}
.bottombar {
    height: 5px;
    flex-shrink: 0;
    background: #d8dadd;
    border-top: 1px solid #a0a6aa;
}

/* dialog */
.dialog {
    position: absolute;
    left: 160px;
    top: 61px;
    bottom: 0;
    width: 939px;
    display: flex;
    flex-direction: column;
    background: #efefef;
    border-left: 1px solid #c4ccd6;
    border-right: 1px solid #c4ccd6;
    box-shadow: 2px 2px 4px rgba(0, 0, 0, 0.5);
}
.titlebar {
    height: 34px;
    flex-shrink: 0;
    display: flex;
    align-items: center;
    justify-content: space-between;
    margin: 0 -1px;
    padding: 0 12px 2px 10px;
    background: #2c80e2;
    color: #fff;
}
.window-buttons {
    display: flex;
    gap: 23px;
    margin-top: 2px;
}
.tabs {
    height: 35px;
    flex-shrink: 0;
    display: flex;
    align-items: flex-end;
    gap: 4px;
    padding-left: 13px;
}
.tab {
    height: 25px;
    width: 90px;
    margin-bottom: 1px;
    border-radius: 3px 3px 0 0;
    background: #dcdcdc;
    color: #555;
}
.tab.on {
    height: 31px;
    width: 92px;
    margin-bottom: -1px;
    position: relative;
    background: #fff;
    border: 1px solid #c4c8ce;
    border-bottom: none;
    color: #2c80e2;
}
.sheet {
    flex: 1;
    min-height: 0;
    display: flex;
    flex-direction: column;
    margin: 0 15px 0 13px;
    padding-top: 12px;
    background: #fff;
    border: 1px solid #c4c8ce;
    border-bottom: none;
}
.pane {
    flex: 1;
    min-height: 0;
    display: flex;
    flex-direction: column;
    border: 1px solid #b8bcc0;
    border-radius: 3px;
}
.quantities {
    flex-basis: 7px;
}
.options {
    height: 33px;
    flex-shrink: 0;
    display: flex;
    align-items: center;
    gap: 8px;
    padding: 0 0 8px 7px;
}
.options label {
    display: flex;
    align-items: center;
    gap: 9px;
    white-space: nowrap;
}
.options label.check {
    gap: 4px;
    margin-left: 2px;
}
.options label.off {
    margin-left: 3px;
    color: #888;
}
.options input {
    appearance: none;
    margin: 0;
    width: 16px;
    height: 16px;
    border: 1px solid #b4b4b4;
    border-radius: 8px;
    background: #fff;
}
.options input[type="radio"]:checked {
    background: radial-gradient(#b8b8b8 0 4px, #fff 5px);
}
.options input[type="checkbox"] {
    width: 17px;
    height: 17px;
    border-radius: 3px;
    border-color: #55a2fa;
    background: #55a2fa;
    display: flex;
    align-items: center;
    justify-content: center;
}
.options input[type="checkbox"]::after {
    content: "";
    width: 10px;
    height: 5px;
    margin-bottom: 4px;
    border-left: 2px solid #fff;
    border-bottom: 2px solid #fff;
    transform: rotate(-45deg);
}
.options input[type="checkbox"]:disabled {
    background: #ececec;
    border-color: #aaa;
}
.options input[type="checkbox"]:disabled::after {
    border-color: #999;
}

.grid {
    width: 466px;
    table-layout: fixed;
    border-collapse: collapse;
    line-height: 17px;
}
.grid col.num {
    width: 9px;
}
.grid th, .grid td {
    padding: 0 3px;
    border: 1px solid #111;
    overflow: hidden;
}
.grid th {
    padding-bottom: 3px;
}
.grid .top {
    height: 23px;
}
.grid .names {
    height: 59px;
}
.grid .names td {
    padding: 0 2px 4px 0;
    text-align: center;
    font-family: "Noto Sans CJK SC", sans-serif;
}
.grid tbody tr {
    height: 24px;
}
.grid tbody td {
    text-align: right;
    font-family: "Liberation Mono", "Noto Sans CJK SC", monospace;
    font-size: 13px;
}
.grid tbody td.name {
    text-align: center;
}
.grid .total td {
    background: #e2e2e2;
    line-height: 20px;
}
.grid .total .name {
    font-size: 15px;
}
.grid td.num, .grid tbody td.num {
    padding: 0;
    border-color: #d4d4d4;
    border-right-color: #111;
    background: #f2f2f2;
    color: #555;
    font-family: "Noto Sans", sans-serif;
}

.splitter {
    height: 7px;
    flex-shrink: 0;
    margin-bottom: 12px;
    background: #f0f0f0;
}
.details-title {
    height: 29px;
    flex-shrink: 0;
    display: flex;
    gap: 11px;
    line-height: 22px;
}
.list {
    flex: 1;
    min-height: 0;
    display: flex;
    flex-direction: column;
    border: 2px solid #94999f;
    border-top-width: 1px;
    border-left-width: 1px;
}
.list table {
    width: 100%;
    table-layout: fixed;
    border-collapse: collapse;
}
.list tr > * {
    padding: 0;
}
.list .num {
    width: 9px;
}
.list .part {
    width: 100px;
}
.list .place {
    width: 199px;
}
.list thead tr {
    height: 21px;
}
.list thead th {
    background: #80bbfa;
    color: #fff;
    border-right: 1px solid #c4ccd4;
    border-bottom: 1px solid #c4ccd4;
}
.list thead td {
    background: #f0f0f0;
}
.list tbody tr {
    height: 37px;
}
.list tbody th {
    background: #80bbfa;
    color: #fff;
}
.list tbody td {
    padding-left: 4px;
    font-size: 16px;
    background: #2c80e2;
    border-right: 1px solid #c4ccd4;
}
.gutter {
    flex: 1;
    width: 9px;
    background: #f0f0f0;
}
.actions {
    height: 40px;
    flex-shrink: 0;
    display: flex;
    gap: 8px;
    padding: 9px 7px 0;
}
.actions button {
    width: 175px;
    height: 32px;
    flex-shrink: 0;
    background: #fff;
    border: 1px solid #c8c8c8;
    border-radius: 3px;
}
.actions .exit {
    width: 100px;
    margin-left: auto;
    background: #2c80e2;
    border-color: #2c80e2;
    color: #fff;
}
.dialog-marks {
    position: absolute;
    left: 397px;
    top: 109px;
    pointer-events: none;
}
```
